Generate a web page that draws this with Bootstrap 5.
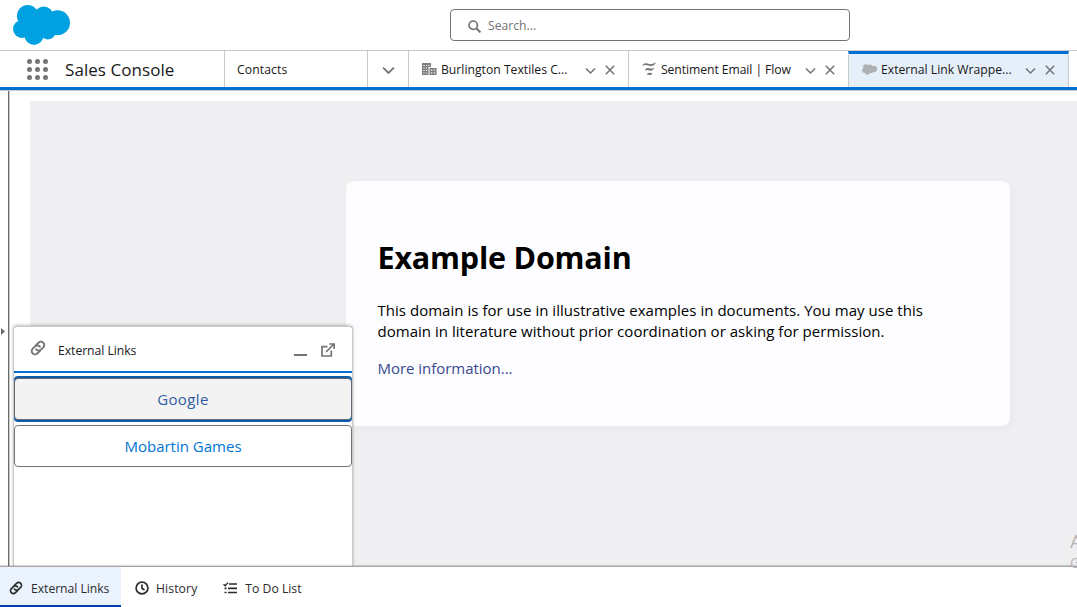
<!DOCTYPE html>
<html lang="en">
<head>
<meta charset="utf-8">
<meta name="viewport" content="width=device-width, initial-scale=1">
<title>Sales Console</title>
<link href="https://cdn.jsdelivr.net/npm/bootstrap@5.3.0/dist/css/bootstrap.min.css" rel="stylesheet">
<style>
  body { font-family: "Open Sans", "Noto Sans", sans-serif; font-size: 12.2px; line-height: 18px; color: #181818; background: #fff; }
  svg { display: block; flex: none; }
  .ico { color: #747474; }
  .top-header { height: 51px; border-bottom: 1px solid #c9c9c9; }
  .search-box { width: 400px; height: 32px; margin-top: 9px; border: 1px solid #747474; border-radius: 4px; padding-left: 17px; color: #747474; }
  .search-box span { padding: 1px 0 0 7px; }
  .console-nav { height: 39px; border-bottom: 3px solid #0070d2; }
  .app-name { width: 159px; font-size: 17px; letter-spacing: .06px; padding-top: 1px; }
  .nav-cell { border-left: 1px solid #c9c9c9; height: 36px; }
  .nav-label { padding-top: 2px; }
  .console-tab { width: 220px; padding: 0 13px 0 12px; }
  .console-tab.active { width: 221px; background: #e5effa; border-top: 3px solid #0070d2; border-right: 1px solid #c9c9c9; padding-bottom: 2px; }
  .console-tab .label-text { width: 140px; padding: 2px 0 0 5px; }
  .console-tab.active .label-text { padding-top: 1px; }
  .tab-icon { margin: 0 -1px 0 1px; }
  .tab-tools { gap: 9px; padding-top: 1px; }
  .tab-tools svg:first-child { margin-top: 2px; }
  .workspace { height: 476px; border-top: 1px solid #c9c9c9; }
  .side-rail { width: 10px; border-right: 1px solid #c9c9c9; box-shadow: inset -1px 0 0 #6b6b6b; }
  .rail-arrow { margin: 237px 0 0 1px; }
  .frame-area { margin: 10px 0 0 20px; background: #efeff1; padding: 80px 0 0 316px; }
  .domain-box { width: 664px; height: 245px; padding: 32px 32px 32px 31.500px; background: #fdfdff; border-radius: 8px; box-shadow: 2px 3px 7px 2px rgba(0,0,0,.02); color: #000; font-size: 15px; line-height: 21px; }
  .domain-box h1 { font-size: 30.5px; line-height: 43px; font-weight: 700; letter-spacing: -.2px; margin: 23px 0 21px; }
  .domain-box p { margin: 0 0 16px; letter-spacing: .03px; white-space: nowrap; }
  .domain-box a { color: #38488f; text-decoration: none; }
  .links-panel { position: absolute; left: 13px; bottom: 41px; width: 340px; height: 240px; background: #fff; border: 1px solid #c9c9c9; border-bottom: 0; border-radius: 4px 4px 0 0; box-shadow: 0 -1px 3px rgba(0,0,0,.25); }
  .panel-head { height: 46px; border-bottom: 2px solid #0070d2; padding: 4px 17px 0 16px; }
  .link-btn { height: 42px; border: 1px solid #747474; border-radius: 4px; color: #0176d3; font-size: 15px; background: #fff; padding: 0; line-height: 40px; }
  .link-btn:hover, .link-btn.hot { background: #f3f3f3; color: #2f5c9f; border-color: #747474; }
  .link-btn.hot { border-color: #5f6a75; box-shadow: 0 -2px 0 #0b5cab, 0 2px 0 #0b5cab; margin: 5px 0 5px; letter-spacing: .4px; }
  .utility-bar { height: 41px; border-top: 1px solid #a4a4a4; box-shadow: 0 -1px 1px rgba(0,0,0,.14); color: #2b2b2b; position: relative; background: #fff; }
  .util-item { height: 40px; border-bottom: 2px solid transparent; padding-top: 4px; }
  .util-item span { padding-top: 1px; }
  .util-item.active { width: 121px; background: #ebf4fe; border-bottom-color: #0044a8; }
  .activation { position: absolute; left: 1070px; top: 531px; font-size: 19px; line-height: 21px; color: #b5b5b6; white-space: nowrap; z-index: 3; }
  .activation span { display: block; font-size: 14px; line-height: 22px; }
</style>
</head>
<body class="overflow-hidden">
<svg class="d-none">
  <symbol id="chev" viewBox="0 0 12 8"><path d="M1 1.300 6 6.200 11 1.300" fill="none" stroke="currentColor" stroke-width="1.700"/></symbol>
  <symbol id="close" viewBox="0 0 10 10"><path d="M.8.8 9.200 9.200M9.200.8.8 9.200" fill="none" stroke="currentColor" stroke-width="1.500"/></symbol>
  <symbol id="chain" viewBox="0 0 16 16"><g fill="none" stroke="currentColor" stroke-width="1.900" stroke-linecap="round"><path d="M6.200 4.900 8.600 2.700a3.300 3.300 0 0 1 4.700 4.700L11 9.600a3.300 3.300 0 0 1-4.900-.4"/><path d="M9.800 11.100 7.400 13.300a3.300 3.300 0 0 1-4.700-4.700L5 6.400a3.300 3.300 0 0 1 4.900.4"/></g></symbol>
  <symbol id="cloud" viewBox="13 5 57 40"><circle cx="27.700" cy="15.800" r="10.800"/><circle cx="43.700" cy="15.900" r="9.500"/><circle cx="57.600" cy="22.700" r="12.400"/><circle cx="22" cy="29" r="9"/><circle cx="34" cy="35.300" r="9.600"/><circle cx="47.800" cy="31.200" r="8.200"/><path d="M20 18 45 12 58 20 50 36 32 38Z"/></symbol>
</svg>

<header class="top-header d-flex">
  <svg width="57" height="40" style="margin:5px 0 0 13px" fill="#00a1e0"><use href="#cloud"/></svg>
  <div class="search-box d-flex align-items-center" style="margin-left:380px">
    <svg width="13" height="13" viewBox="0 0 13 13" style="margin-top:3px" fill="none" stroke="#747474"><circle cx="5.200" cy="5.200" r="4.200" stroke-width="1.700"/><path d="m8.200 8.200 4.200 4.200" stroke-width="2"/></svg>
    <span>Search...</span>
  </div>
</header>

<nav class="console-nav d-flex">
  <svg class="ico" width="22" height="22" style="margin:8px 16px 0 27px" viewBox="0 0 22 22" fill="currentColor"><circle cx="2.500" cy="2.500" r="2.500"/><circle cx="10.500" cy="2.500" r="2.500"/><circle cx="18.500" cy="2.500" r="2.500"/><circle cx="2.500" cy="10.500" r="2.500"/><circle cx="10.500" cy="10.500" r="2.500"/><circle cx="18.500" cy="10.500" r="2.500"/><circle cx="2.500" cy="18.500" r="2.500"/><circle cx="10.500" cy="18.500" r="2.500"/><circle cx="18.500" cy="18.500" r="2.500"/></svg>
  <div class="app-name d-flex align-items-center">Sales Console</div>
  <div class="nav-cell nav-label d-flex align-items-center" style="width:143px;padding-left:12px;letter-spacing:.1px">Contacts</div>
  <div class="nav-cell d-flex align-items-center justify-content-center ico" style="width:41px;padding-top:2px"><svg width="13" height="9"><use href="#chev"/></svg></div>
  <div class="nav-cell console-tab d-flex align-items-center">
    <svg class="tab-icon" width="15" height="12" viewBox="0 0 15 12"><path d="M0 0h9v4H6.500v8H0z" fill="#7d7d7d"/><path d="M7.500 5H14.500v7h-7z" fill="#7d7d7d"/><path d="M1.300 2.500h1.400M3.800 2.500h1.400M6.200 2.500h1.400M1.300 5h1.400M3.800 5h1.400M1.300 7.500h1.400M3.800 7.500h1.400M1.300 10h1.400M3.800 10h1.400M8.800 7.200h1.400M11.600 7.200H13M8.800 9.800h1.400M11.600 9.800H13" stroke="#eee" stroke-width="1.200"/></svg>
    <span class="label-text">Burlington Textiles C...</span>
    <span class="tab-tools d-flex align-items-center ico ms-auto"><svg width="11" height="8"><use href="#chev"/></svg><svg width="10" height="10"><use href="#close"/></svg></span>
  </div>
  <div class="nav-cell console-tab d-flex align-items-center">
    <svg class="ico tab-icon" width="15" height="14" viewBox="0 0 15 14" fill="currentColor"><path d="M.3 4C1 1.500 3.200.8 5.500 1.600 8.500 2.600 10.500 2.300 14 .3 12.900 3.200 10.500 4.600 7.400 3.800 4.600 3 2.800 2.600.3 4Z"/><path d="M3 8.600C3.600 6.200 5.300 5.700 7 6.300 9 7 10.300 6.700 12.200 5.400 11.300 8.100 9.600 9 7.500 8.500 5.600 7.900 4.600 7.700 3 8.600Z"/><path d="M5 13C5.400 11 6.500 10.400 7.700 10.900 8.700 11.200 9.300 11.100 10.300 10.400 9.900 12.500 8.900 13.300 7.500 13 6.500 12.600 6 12.500 5 13Z"/></svg>
    <span class="label-text" style="letter-spacing:-.08px">Sentiment Email | Flow</span>
    <span class="tab-tools d-flex align-items-center ico ms-auto"><svg width="11" height="8"><use href="#chev"/></svg><svg width="10" height="10"><use href="#close"/></svg></span>
  </div>
  <div class="nav-cell console-tab active d-flex align-items-center">
    <svg class="tab-icon" width="15" height="11" fill="#aeb1b3"><use href="#cloud"/></svg>
    <span class="label-text">External Link Wrappe...</span>
    <span class="tab-tools d-flex align-items-center ico ms-auto"><svg width="11" height="8"><use href="#chev"/></svg><svg width="10" height="10"><use href="#close"/></svg></span>
  </div>
</nav>

<main class="workspace d-flex">
  <aside class="side-rail flex-shrink-0"><svg class="rail-arrow" width="4" height="7" viewBox="0 0 4 7"><path d="M0 0 4 3.500 0 7z" fill="#6b6b6b"/></svg></aside>
  <section class="frame-area flex-grow-1">
    <article class="domain-box">
      <h1>Example Domain</h1>
      <p>This domain is for use in illustrative examples in documents. You may use this<br>domain in literature without prior coordination or asking for permission.</p>
      <p style="letter-spacing:-.03px"><a href="#">More information...</a></p>
    </article>
  </section>
</main>

<section class="links-panel">
  <div class="panel-head d-flex align-items-center">
    <svg class="ico" width="16" height="16" style="margin-top:-6px"><use href="#chain"/></svg>
    <span style="margin-left:12px;letter-spacing:-.04px">External Links</span>
    <svg class="ico ms-auto" width="13" height="2" style="margin-top:8px"><path d="M0 1h13" stroke="currentColor" stroke-width="2"/></svg>
    <svg class="ico" width="14" height="14" viewBox="0 0 14 14" fill="none" stroke="currentColor" stroke-width="1.700" style="margin-left:14px;margin-top:-2px"><path d="M6.500 3.700H1v9.300h9.300V7.500M5 9 12.500 1.500M8.300 1h4.900v4.900"/></svg>
  </div>
  <button class="btn link-btn hot w-100 d-block">Google</button>
  <button class="btn link-btn w-100 d-block">Mobartin Games</button>
</section>

<footer class="utility-bar d-flex">
  <div class="util-item active d-flex align-items-center" style="padding-left:9px"><svg width="14" height="14"><use href="#chain"/></svg><span class="ps-2" style="letter-spacing:-.04px">External Links</span></div>
  <div class="util-item d-flex align-items-center" style="padding-left:14px"><svg width="14" height="14" viewBox="0 0 14 14" fill="none" stroke="currentColor" stroke-width="1.700"><circle cx="7" cy="7" r="5.900"/><path d="M7 3.500V7.300L9.500 9"/></svg><span style="padding-left:7px;letter-spacing:.1px">History</span></div>
  <div class="util-item d-flex align-items-center" style="padding-left:26px"><svg width="14" height="12" viewBox="0 0 14 12" fill="none" stroke="currentColor" stroke-width="1.700"><path d="M6 2h8M5 6.300h9M5 10.500h9M1.500 6.300h2M1.500 10.500h2"/><path d="M.5 2.200 2.200 3.800 5 .6" stroke-width="1.400"/></svg><span style="padding-left:8px">To Do List</span></div>
</footer>
<div class="activation">A<span>Go</span></div>
<script src="https://cdn.jsdelivr.net/npm/bootstrap@5.3.0/dist/js/bootstrap.bundle.min.js"></script>
</body>
</html>
